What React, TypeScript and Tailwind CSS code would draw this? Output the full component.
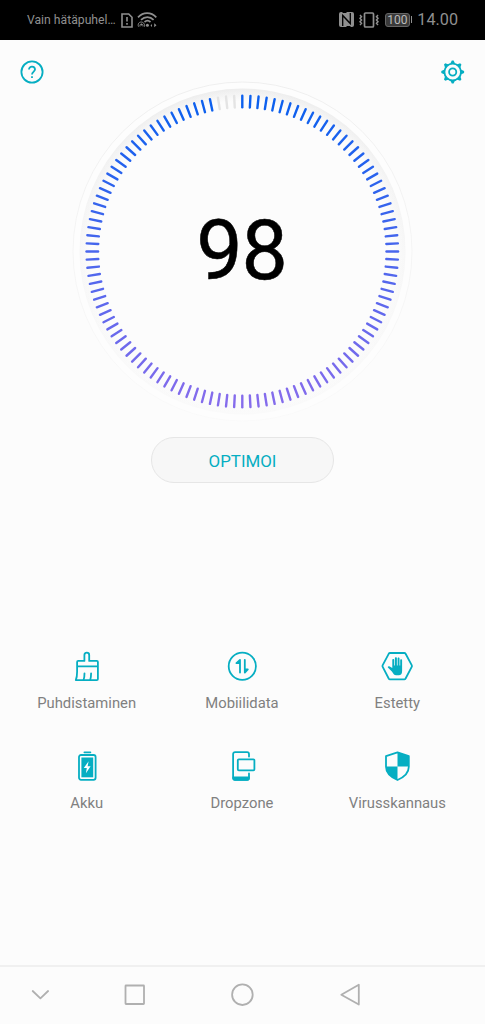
import React from "react";

const TEAL = "#06aec2";

interface IconProps {
  children: React.ReactNode;
}

// Shared 32x32 canvas for the shortcut icons
const ShortcutIcon: React.FC<IconProps> = ({ children }) => (
  <svg
    className="w-8 h-8"
    viewBox="0.2 0 32 32"
    fill="none"
    stroke={TEAL}
    strokeWidth="1.8"
    strokeLinecap="round"
    strokeLinejoin="round"
    aria-hidden="true"
  >
    {children}
  </svg>
);

const shortcuts = [
  {
    label: "Puhdistaminen",
    icon: (
      <ShortcutIcon>
        <path d="M6.300 16.400V12c0-.7.400-1.100 1.100-1.100h6.200V5c0-3.200 4.800-3.200 4.800 0v5.900h7.600c.7 0 1.100.400 1.100 1.100v17c0 .7-.400 1.100-1.100 1.100H5c1-2.400 1.300-5 1.300-8.400v-5.300h20.800" />
        <path d="M13.700 23.300c0 2.800-.2 4.700-.9 6.700M20.300 23.300c0 2.800-.2 4.700-.9 6.700" />
      </ShortcutIcon>
    ),
  },
  {
    label: "Mobiilidata",
    icon: (
      <ShortcutIcon>
        <circle cx="16.500" cy="16.300" r="13.600" />
        <path d="M14.200 22.600V10l-3.600 3.200h3.600M19 9.800v12.800l3-3.200h-3" fill={TEAL} />
      </ShortcutIcon>
    ),
  },
  {
    label: "Estetty",
    icon: (
      <ShortcutIcon>
        <path d="M9.200 3h14.300c.6 0 1 .3 1.300.8l6.100 11.300c.3.600.3 1.200 0 1.800l-6.100 11.600c-.3.500-.7.800-1.300.8H9.200c-.6 0-1-.3-1.300-.8L1.900 16.900c-.3-.6-.3-1.200 0-1.800L7.900 3.800c.3-.5.700-.8 1.300-.8z" />
        <path
          d="M11.300 21.700 7.300 17.800c-1-1.200.4-2.200 1.600-1.300l2.600 1.600V10c0-1.400 1.900-1.400 1.900 0v5.600h.7V8.300c0-1.400 2-1.400 2 0v7.300h.7V8.600c0-1.400 1.900-1.400 1.900 0v7h.7v-5.200c0-1.400 1.900-1.400 1.900 0v10.500c0 2.900-1.100 4.300-3.400 4.300h-2.600c-1.600 0-2.700-1-4-3.500z"
          fill={TEAL}
          stroke="none"
        />
      </ShortcutIcon>
    ),
  },
  {
    label: "Akku",
    icon: (
      <ShortcutIcon>
        <path d="M13.600 2.300h6" />
        <rect x="8.200" y="5" width="16.600" height="24.800" rx="2" />
        <rect x="10.600" y="7.500" width="11.800" height="19.800" fill={TEAL} stroke="none" />
        <path d="M17.800 11.300 13 18.100h3l-.9 5.100 4.700-6.900h-3z" fill="#fff" stroke="none" />
      </ShortcutIcon>
    ),
  },
  {
    label: "Dropzone",
    icon: (
      <ShortcutIcon>
        <path d="M23.200 6.600V4.200c0-1.200-.7-2-1.900-2H9.300c-1.200 0-2 .8-2 2v23.600c0 1.200.8 2 2 2h12c1.200 0 1.900-.8 1.900-2v-4.400" />
        <path d="M7.500 27.500h15.500v.6c0 1-.7 1.700-1.700 1.700H9.200c-1 0-1.700-.7-1.700-1.700z" fill={TEAL} />
        <rect x="12" y="9.300" width="16.600" height="11" rx="1" />
      </ShortcutIcon>
    ),
  },
  {
    label: "Virusskannaus",
    icon: (
      <ShortcutIcon>
        <path d="M16.700 2.300 28 6.200v10.600c0 6.300-4.500 10.300-11.300 13.200C9.900 27.100 5.200 23.100 5.200 16.800V6.200z" />
        <path d="M16.700 2.300 28 6.200v10.300H16.700zM5.200 16.500h11.500V30C9.900 27.100 5.200 23.100 5.200 16.800z" fill={TEAL} stroke="none" />
      </ShortcutIcon>
    ),
  },
];

const TICKS = 120;
const EMPTY_TICKS = 3;

const ScoreDial: React.FC<{ score: number }> = ({ score }) => {
  const ticks = Array.from({ length: TICKS }, (_, i) => {
    // 0 at the top, 1 at the bottom
    const t = (1 - Math.cos((i * 2 * Math.PI) / TICKS)) / 2;
    const mix = (from: number, to: number) => Math.round(from + (to - from) * t);
    const empty = i >= TICKS - EMPTY_TICKS;
    return {
      angle: (i * 360) / TICKS,
      color: empty ? "#e4e4e4" : `rgb(${mix(12, 133)}, ${mix(96, 108)}, ${mix(238, 236)})`,
    };
  });

  return (
    <div className="grid place-items-center w-[345px] h-[345px]">
      <svg className="col-start-1 row-start-1" width="345" height="345" viewBox="0 0 345 345" aria-hidden="true">
        <defs>
          <linearGradient id="ring" x1="0" y1="0" x2="0" y2="1">
            <stop offset="0" stopColor="#efefef" />
            <stop offset="1" stopColor="#fafafa" />
          </linearGradient>
          <linearGradient id="shade" x1="0" y1="0" x2="0" y2="1">
            <stop offset="0" stopColor="#ededed" />
            <stop offset="0.5" stopColor="#f7f7f7" />
            <stop offset="1" stopColor="#fafafa" />
          </linearGradient>
          <radialGradient id="face">
            <stop offset="0.92" stopColor="#fcfcfc" />
            <stop offset="1" stopColor="#fcfcfc" stopOpacity="0" />
          </radialGradient>
        </defs>
        <circle cx="172.500" cy="172.500" r="169.500" fill="#fdfdfd" stroke="url(#ring)" />
        <circle cx="172.500" cy="172.500" r="163" fill="url(#shade)" />
        <circle cx="172.500" cy="172.500" r="163" fill="url(#face)" />
        {ticks.map(({ angle, color }) => (
          <line
            key={angle}
            x1="172.300"
            x2="172.300"
            y1="16.700"
            y2="28.300"
            stroke={color}
            strokeWidth="2.400"
            strokeLinecap="round"
            transform={`rotate(${angle} 172.300 172.500)`}
          />
        ))}
      </svg>
      <div className="col-start-1 row-start-1 mr-[2px] text-[82.500px] leading-none tracking-[-1px] text-black [-webkit-text-stroke:0.5px_black]">
        {score}
      </div>
    </div>
  );
};

const StatusBar: React.FC = () => (
  <header className="flex items-center h-10 bg-black text-[#8f8f8f] pl-[27px] pr-[27px]">
    <span className="text-[12.200px] w-[89px] whitespace-nowrap">Vain hätäpuhel…</span>
    <svg className="ml-[5px]" width="12" height="15" viewBox="0 0 12 15" fill="none" stroke="currentColor" strokeWidth="1.600" aria-hidden="true">
      <path d="M1 1h6.700L11 4.300V14H1z" />
      <path d="M6 4v4.500M6 10v1.700" />
    </svg>
    <svg className="ml-1" width="21" height="16" viewBox="0 0 21 16" fill="none" stroke="currentColor" strokeWidth="1.700" aria-hidden="true">
      <path d="M1 5.300c5.300-5.600 13-5.600 18.300 0M4 7.800c3.800-3.700 9-3.700 12.600 0M7.500 10c2-1.700 4-1.700 6 0" />
      <path d="M1.500 14.700c-2.200-6 7-6.500 6 0M3 14.500c-.8-3.300 3.500-3.300 3 0" strokeWidth="0.900" />
      <circle cx="4.500" cy="12.700" r="0.900" fill="currentColor" stroke="none" />
      <circle cx="10.400" cy="13.300" r="1.500" fill="currentColor" stroke="none" />
      <path d="M15 12v3l-1.500-1.500zM17.200 11.300v4l2.300-2z" fill="currentColor" stroke="none" />
    </svg>
    <div className="flex items-center ml-auto">
      <svg width="15" height="15" viewBox="0 0 15 15" aria-hidden="true">
        <rect width="15" height="15" rx="2" fill="currentColor" />
        <path d="M3.700 14V3.500l7 7.500M11.300 1v10.500l-7-7.500" fill="none" stroke="#000" strokeWidth="1.300" />
        <path d="M3.500.5h4M7.500 14.500h4" stroke="#000" strokeWidth="1" />
      </svg>
      <svg className="ml-[5px]" width="20" height="16" viewBox="0 0 20 16" fill="none" stroke="currentColor" strokeWidth="1.700" aria-hidden="true">
        <rect x="5.500" y="1" width="9" height="14" rx="1" />
        <path d="M1 3l1.500 1.700L1 6.300 2.500 8 1 9.700l1.500 1.600L1 13M19 3l-1.500 1.700L19 6.300 17.500 8 19 9.700l-1.500 1.600L19 13" strokeWidth="1.500" />
      </svg>
      <span className="flex items-center justify-center ml-[6px] w-[25px] h-[14px] rounded-[3px] border border-[#666] bg-[#3a3a3a] text-[12px] leading-none text-[#bbb]">
        100
      </span>
      <span className="ml-px w-[1.500px] h-[7px] bg-[#8f8f8f]" />
      <span className="ml-[5px] pt-px text-[16.200px] leading-none">14.00</span>
    </div>
  </header>
);

const NavBar: React.FC = () => (
  <nav className="h-[59px] border-t-2 border-[#f0f0f0]">
    <svg width="485" height="57" viewBox="0 0 485 57" fill="none" stroke="#b0b0b0" strokeWidth="1.800" strokeLinejoin="round" strokeLinecap="round" aria-hidden="true">
      <path d="M32.700 24l7.700 7.300 7.700-7.300" />
      <rect x="125.500" y="18.500" width="18.500" height="18.500" rx="0.500" />
      <circle cx="242.400" cy="27.700" r="10.300" />
      <path d="M358.800 17.800v19.700l-17.500-9.800z" />
    </svg>
  </nav>
);

const App: React.FC = () => {
  return (
    <div className="flex flex-col w-[485px] h-[1024px] bg-[#fcfcfc] font-[Roboto,sans-serif] overflow-hidden">
      <StatusBar />
      <main className="flex flex-col flex-1 items-center">
        <div className="flex justify-between w-full h-[39px] pl-5 pr-5 pt-5">
          <button aria-label="Ohje" className="w-6 h-6">
            <svg width="24" height="24" viewBox="0 0 24 24" fill="none" stroke={TEAL} strokeWidth="1.800" aria-hidden="true">
              <circle cx="12" cy="12" r="10.600" />
              <path d="M9 9.600c0-4 6-3.900 6 0 0 2-3 2.300-3 5" />
              <path d="M12 16.200V18" />
            </svg>
          </button>
          <button aria-label="Asetukset" className="w-6 h-6">
            <svg width="24" height="24" viewBox="0 0 24 24" fill="none" stroke={TEAL} strokeWidth="1.800" aria-hidden="true">
              <circle cx="11.700" cy="12" r="8.300" />
              <circle cx="11.700" cy="12" r="3.600" />
              {[0, 45, 90, 135, 180, 225, 270, 315].map((angle) => (
                <path key={angle} d="M9.200 3.800 10.800.6h1.800l1.600 3.200z" fill={TEAL} stroke="none" transform={`rotate(${angle} 11.700 12)`} />
              ))}
            </svg>
          </button>
        </div>
        <ScoreDial score={98} />
        <button className="mt-[13px] w-[183px] h-[46px] pt-[3px] rounded-full border border-[#e6e6e6] bg-[#f7f7f7] text-[16.900px] text-[#06aec2]">
          OPTIMOI
        </button>
        <div className="grid grid-cols-3 gap-y-[18px] w-[466px] mt-[167px] mr-px">
          {shortcuts.map(({ label, icon }) => (
            <div key={label} className="flex flex-col items-center h-[82px]">
              {icon}
              <span className="mt-[11px] text-[14.800px] leading-5 text-[#808080]">{label}</span>
            </div>
          ))}
        </div>
      </main>
      <NavBar />
    </div>
  );
};

export default App;
